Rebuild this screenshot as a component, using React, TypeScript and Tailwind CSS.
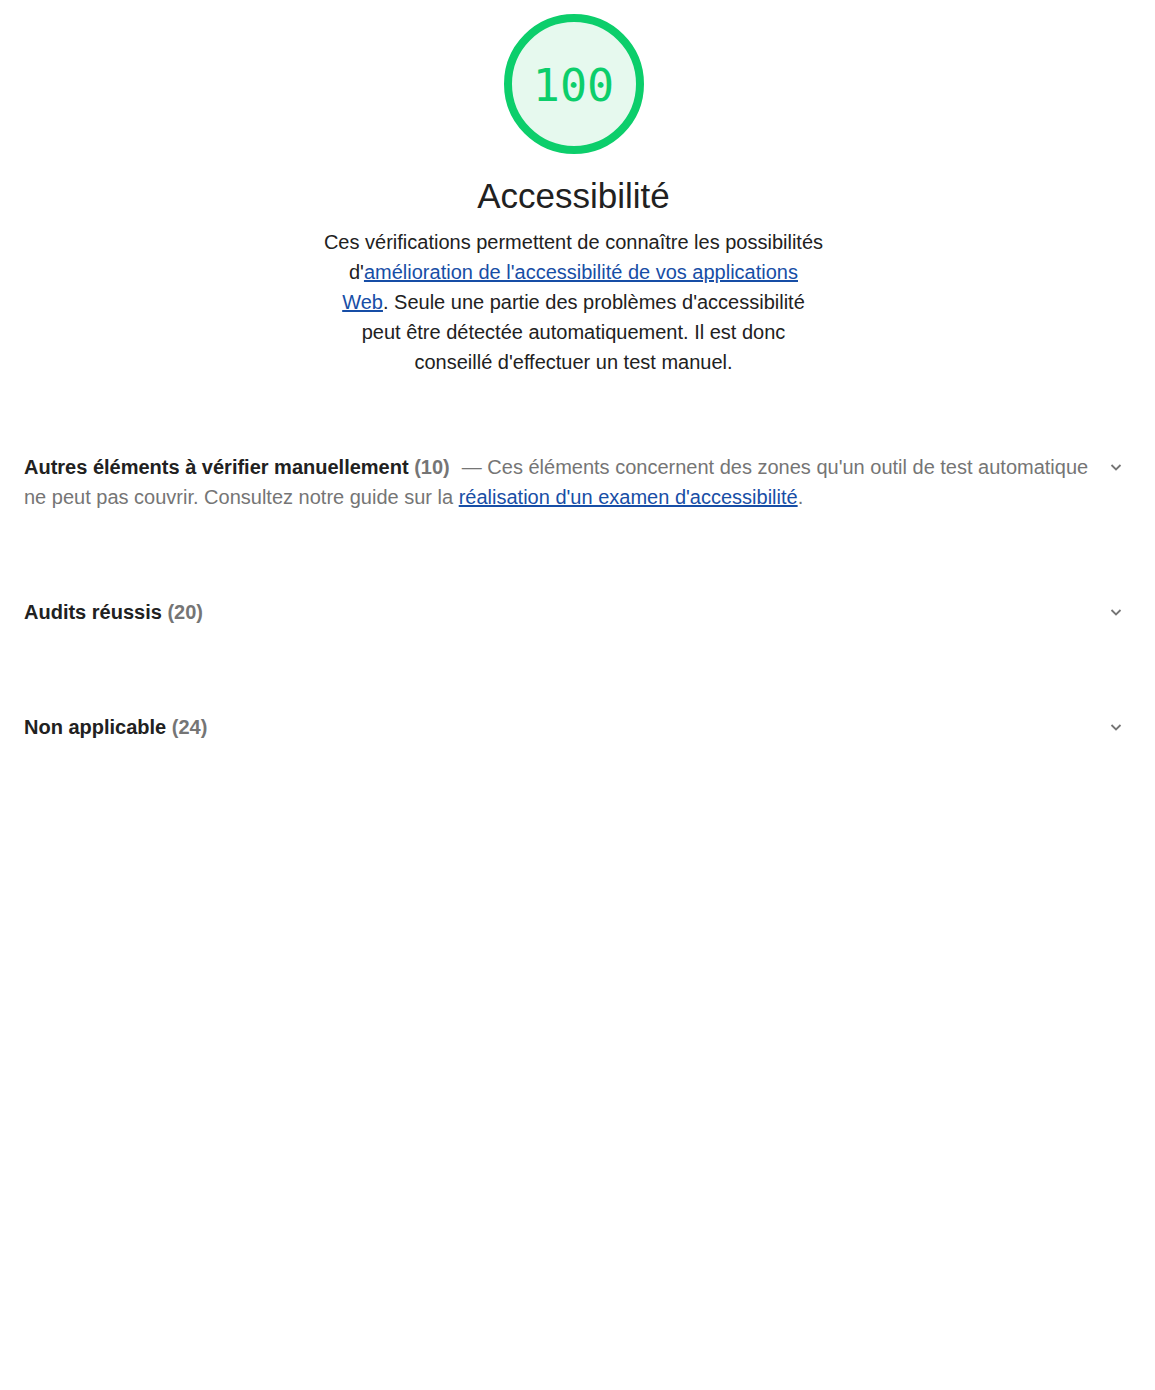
import React from 'react';

const groups = [
  {
    title: 'Autres éléments à vérifier manuellement',
    count: 10,
    description: true,
  },
  { title: 'Audits réussis', count: 20 },
  { title: 'Non applicable', count: 24 },
];

function Chevron() {
  return (
    <svg width="14" height="14" viewBox="0 0 14 14" className="shrink-0 text-[#757575]">
      <path d="M2.5 5 L7 9.5 L11.5 5" fill="none" stroke="currentColor" strokeWidth="1.8" />
    </svg>
  );
}

function Gauge() {
  return (
    <div className="relative w-[144px] h-[144px]">
      <svg width="144" height="144" viewBox="0 0 144 144" className="absolute inset-0">
        <circle cx="72" cy="72" r="66" fill="#e6f9ee" stroke="#0cce6b" strokeWidth="8" />
      </svg>
      <div className="absolute inset-0 pt-[4px] flex items-center justify-center text-[#0cce6b] text-[45px] font-['DejaVu_Sans_Mono',monospace]">
        100
      </div>
    </div>
  );
}

export default function App() {
  return (
    <div className="w-[1147px] min-h-[1390px] bg-white font-['Liberation_Sans',Arial,sans-serif] text-[#212121]">
      <div className="flex flex-col items-center pt-[12px]">
        <Gauge />
        <h1 className="mt-[20px] text-[35px] leading-[40px] text-[#212121]">Accessibilité</h1>
        <p className="mt-[11px] w-[560px] text-center text-[20px] leading-[30px]">
          Ces vérifications permettent de connaître les possibilités
          <br />
          d'
          <a className="text-[#174ea6] underline" href="#">
            amélioration de l'accessibilité de vos applications
            <br />
            Web
          </a>
          . Seule une partie des problèmes d'accessibilité
          <br />
          peut être détectée automatiquement. Il est donc
          <br />
          conseillé d'effectuer un test manuel.
        </p>
      </div>

      <div className="mt-[75px] pl-[24px] pr-[24px] flex flex-col gap-[85px]">
        {groups.map((g) => (
          <div key={g.title} className="flex items-start gap-[16px]">
            <div className="flex-1 text-[20px] leading-[30px]">
              <span className="font-bold">{g.title}</span>{' '}
              <span className="font-bold text-[#757575]">({g.count})</span>
              {g.description && (
                <span className="text-[#757575]">
                  <span className="inline-block w-[12px]" />— Ces éléments concernent des zones qu'un outil de test
                  automatique ne peut pas couvrir. Consultez notre guide sur la{' '}
                  <a className="text-[#174ea6] underline" href="#">
                    réalisation d'un examen d'accessibilité
                  </a>
                  .
                </span>
              )}
            </div>
            <div className="h-[30px] flex items-center">
              <Chevron />
            </div>
          </div>
        ))}
      </div>
    </div>
  );
}
